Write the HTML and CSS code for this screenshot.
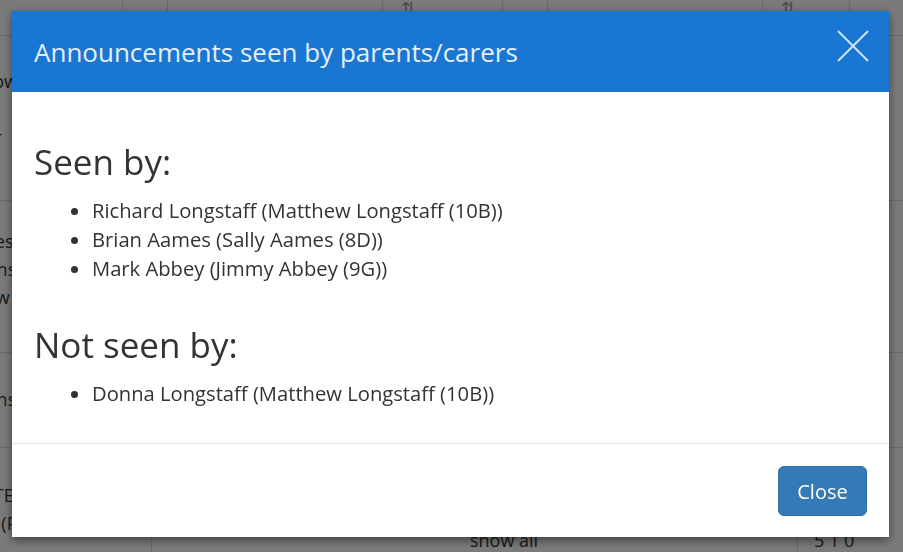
FILE: index.html
```html
<!DOCTYPE html>
<html>
<head>
  <title>Announcements</title>
  <meta name="viewport" content="width=device-width">
  <link rel="stylesheet" href="styles.css">
</head>
<body>
  <div class="page">
    <div class="row head">
      <div class="cell h1"></div>
      <div class="cell h2"></div>
      <div class="cell h3"></div>
      <div class="cell h4"><span class="sort">&#8645;</span></div>
      <div class="cell h5"></div>
      <div class="cell h6"></div>
      <div class="cell h7"><span class="sort">&#8645;</span></div>
    </div>
    <div class="row r1">
      <div class="cell c1"><p>Follow</p><p>17D</p><p>Year</p></div>
    </div>
    <div class="row r2">
      <div class="cell c1"><p>Notes</p><p>Maths</p><p>Show</p></div>
    </div>
    <div class="row r3">
      <div class="cell c1"><p>Maths</p></div>
    </div>
    <div class="row r4">
      <div class="cell c1"><p>(DATE)</p><p>Pon (PTA)</p></div>
      <div class="cell wide"><p class="low">show all</p></div>
      <div class="cell end"><p class="low">5 1 0</p></div>
    </div>
  </div>

  <div class="backdrop">
    <div class="modal">
      <div class="modal-header">
        <h4 class="modal-title">Announcements seen by parents/carers</h4>
        <button class="close" type="button" aria-label="Close">
          <svg width="32" height="32" viewBox="0 0 32 32">
            <path d="M1 1 L31 31 M31 1 L1 31" stroke="#cfe2f6" stroke-width="2" fill="none"/>
          </svg>
        </button>
      </div>
      <div class="modal-body">
        <h2>Seen by:</h2>
        <ul>
          <li>Richard Longstaff (Matthew Longstaff (10B))</li>
          <li>Brian Aames (Sally Aames (8D))</li>
          <li>Mark Abbey (Jimmy Abbey (9G))</li>
        </ul>
        <h2>Not seen by:</h2>
        <ul>
          <li>Donna Longstaff (Matthew Longstaff (10B))</li>
        </ul>
      </div>
      <div class="modal-footer">
        <button class="btn" type="button">Close</button>
      </div>
    </div>
  </div>
</body>
</html>
```

FILE: styles.css
```css
html, body {
  margin: 0;
  height: 100%;
  overflow: hidden;
}
body {
  font-family: "Open Sans", "Noto Sans", sans-serif;
  color: #333;
  background: #fff;
}

/* page behind the dialog */
.page {
  font-size: 18px;
}
.row {
  display: flex;
  border-bottom: 1px solid #ddd;
}
.row.head { height: 35px; }
.row.r1 { height: 164px; }
.row.r2 { height: 151px; }
.row.r3 { height: 94px; }
.row.r4 { height: 120px; border-bottom: 0; }
.cell {
  border-right: 1px solid #ddd;
}
.h1 { width: 122px; }
.h2 { width: 44px; }
.h3 { width: 214px; }
.h4 { width: 119px; }
.h5 { width: 44px; }
.h6 { width: 214px; }
.h7 { width: 86px; }
.sort {
  display: block;
  margin-top: -4px;
  padding: 0 0 0 18px;
  color: #999;
  font-size: 18px;
}
.c1 {
  width: 151px;
  border-right: 0;
}
.r4 .c1 { border-right: 1px solid #ddd; }
.c1 p {
  margin: 0 0 0 -36px;
  line-height: 28px;
}
.r1 .c1 p:first-child { margin-top: 31px; }
.r2 .c1 p:first-child { margin-top: 26px; }
.r3 .c1 p:first-child { margin-top: 32px; }
.r4 .c1 p:first-child { margin-top: 33px; }
.wide { width: 645px; }
.end { border-right: 0; }
.low {
  margin: 80px 0 0 318px;
}
.end .low { margin-left: 16px; }

/* dialog */
.backdrop {
  position: fixed;
  top: 0;
  left: 0;
  right: 0;
  bottom: 0;
  background: rgba(0,0,0,.52);
  padding: 11px 14px 0 12px;
}
.modal {
  background: #fff;
  box-shadow: 0 3px 9px rgba(0,0,0,.5);
}
.modal-header {
  height: 81px;
  background: #1976d2;
  display: flex;
  align-items: flex-start;
  justify-content: space-between;
  padding: 0 20px 0 22px;
}
.modal-title {
  margin: 0;
  align-self: center;
  font-size: 26px;
  font-weight: normal;
  color: #e4effb;
}
.close {
  border: 0;
  background: none;
  padding: 0;
  margin-top: 19px;
  width: 32px;
  height: 32px;
}
.close svg { display: block; }
.modal-body {
  padding: 48px 21px 35px 22px;
}
.modal-body h2 {
  margin: 0 0 12px;
  font-size: 35px;
  font-weight: normal;
  line-height: 44px;
}
.modal-body ul {
  margin: 0 0 40px;
  padding-left: 58px;
  font-size: 20.2px;
  line-height: 29px;
}
.modal-body ul:last-child { margin-bottom: 0; }
.modal-footer {
  border-top: 1px solid #e5e5e5;
  display: flex;
  justify-content: flex-end;
  padding: 22px 22px 21px;
}
.btn {
  font-family: inherit;
  font-size: 20px;
  color: #fff;
  background: #337ab7;
  border: 1px solid #2e6da4;
  border-radius: 6px;
  width: 89px;
  height: 50px;
  padding: 0;
}
```
